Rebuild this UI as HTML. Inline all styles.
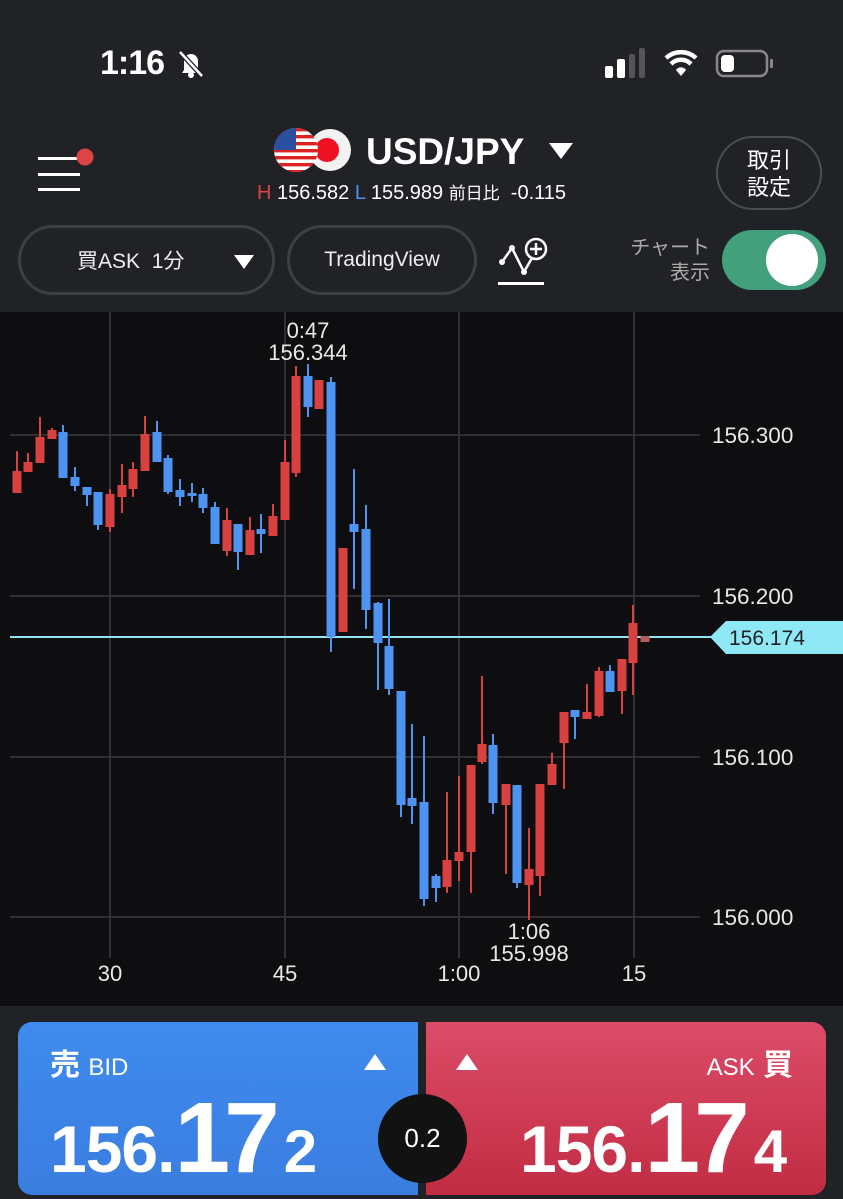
<!DOCTYPE html>
<html><head><meta charset="utf-8"><style>
*{margin:0;padding:0;box-sizing:border-box}
body{width:843px;height:1199px;background:#202226;position:relative;overflow:hidden;font-family:"Liberation Sans","Noto Sans CJK JP",sans-serif;color:#fff}
.a{position:absolute}
.pill{position:absolute;border:3px solid #3c3f44;border-radius:36px;display:flex;align-items:center;justify-content:center;font-size:21px;color:#eee}
.num{position:absolute;font-weight:bold;white-space:nowrap;line-height:1;display:flex;align-items:baseline}
</style></head><body>
<div class="a" style="left:100px;top:44px;font-size:34px;font-weight:bold;letter-spacing:-1px">1:16</div>
<svg class="a" style="left:174px;top:46px" width="34" height="34" viewBox="0 0 34 34"><path d="M10 24 V15 a7 7 0 0 1 14 0 V24 L26 27 H8 Z" fill="#fff"/><circle cx="17" cy="29" r="3" fill="#fff"/><line x1="6" y1="6" x2="28" y2="30" stroke="#202226" stroke-width="5"/><line x1="6" y1="6" x2="28" y2="30" stroke="#fff" stroke-width="2.5"/></svg>
<svg class="a" style="left:600px;top:46px" width="180" height="36"><rect x="5" y="20" width="8" height="12" rx="2" fill="#fff"/><rect x="17" y="13" width="8" height="19" rx="2" fill="#fff"/><rect x="29" y="8" width="6" height="24" rx="2" fill="#555"/><rect x="39" y="2" width="6" height="30" rx="2" fill="#555"/><path d="M66 12 a22 22 0 0 1 30 0" stroke="#fff" stroke-width="4.5" fill="none"/><path d="M71 18 a14 14 0 0 1 20 0" stroke="#fff" stroke-width="4.5" fill="none"/><path d="M76 24 a6 6 0 0 1 10 0 L81 30Z" fill="#fff"/><rect x="117" y="5" width="50" height="25" rx="7" stroke="#888" stroke-width="2.5" fill="none"/><rect x="121" y="9" width="13" height="17" rx="4" fill="#fff"/><rect x="170" y="13" width="3" height="9" rx="1" fill="#888"/></svg>
<svg class="a" style="left:30px;top:140px" width="70" height="60"><rect x="8" y="17" width="42" height="3" fill="#fff"/><rect x="8" y="33" width="42" height="3" fill="#fff"/><rect x="8" y="48" width="42" height="3" fill="#fff"/><circle cx="55" cy="17" r="8.5" fill="#d44"/></svg>
<svg class="a" style="left:270px;top:126px" width="90" height="50"><circle cx="60" cy="24" r="21" fill="#f2f2f2"/><circle cx="57" cy="24" r="12" fill="#e12"/><clipPath id="us"><circle cx="26" cy="24" r="22"/></clipPath><g clip-path="url(#us)"><rect x="0" y="0" width="50" height="50" fill="#fff"/><g fill="#d22"><rect x="0" y="2" width="50" height="3.4"/><rect x="0" y="9" width="50" height="3.4"/><rect x="0" y="16" width="50" height="3.4"/><rect x="0" y="23" width="50" height="3.4"/><rect x="0" y="30" width="50" height="3.4"/><rect x="0" y="37" width="50" height="3.4"/><rect x="0" y="44" width="50" height="3.4"/></g><rect x="0" y="0" width="26" height="24" fill="#2b4ea0"/></g></svg>
<div class="a" style="left:366px;top:131px;font-size:37px;font-weight:bold">USD/JPY</div>
<svg class="a" style="left:549px;top:143px" width="24" height="18"><path d="M0 0H24L12 16Z" fill="#fff"/></svg>
<div class="a" style="left:257px;top:179px;font-size:20px;white-space:nowrap"><span style="color:#d94444">H</span> 156.582 <span style="color:#4d94f2">L</span> 155.989 <span style="font-size:17px">前日比</span> &nbsp;-0.115</div>
<div class="a" style="left:716px;top:136px;width:106px;height:74px;border:2px solid #4a4d52;border-radius:37px;font-size:22px;text-align:center;line-height:27px;padding-top:9px">取引<br>設定</div>
<div class="pill" style="left:18px;top:225px;width:257px;height:70px;justify-content:flex-start;padding-left:56px">買ASK&nbsp;&nbsp;1分<svg style="position:absolute;left:213px;top:27px" width="20" height="14"><path d="M0 0H20L10 14Z" fill="#fff"/></svg></div>
<div class="pill" style="left:287px;top:225px;width:190px;height:70px">TradingView</div>
<svg class="a" style="left:494px;top:232px" width="60" height="56"><polyline points="8,30 18,16 30,40 38,26" stroke="#fff" stroke-width="2.5" fill="none"/><circle cx="8" cy="30" r="3" fill="#fff"/><circle cx="18" cy="16" r="3" fill="#fff"/><circle cx="30" cy="40" r="3" fill="#fff"/><circle cx="42" cy="17" r="10" stroke="#fff" stroke-width="2.5" fill="#202226"/><path d="M42 11V23M36 17H48" stroke="#fff" stroke-width="2.5"/><rect x="4" y="50" width="46" height="3" fill="#fff"/></svg>
<div class="a" style="left:600px;top:236px;width:110px;text-align:right;font-size:20px;line-height:25px;color:#aaa">チャート<br>表示</div>
<div class="a" style="left:722px;top:230px;width:104px;height:60px;border-radius:30px;background:#43a07d"><div class="a" style="left:44px;top:4px;width:52px;height:52px;border-radius:26px;background:#fff"></div></div>
<svg class="a" style="left:0;top:312px" width="843" height="694" viewBox="0 312 843 694">
<rect x="0" y="312" width="843" height="694" fill="#0e0e10"/>
<g stroke="#3a3a3d" stroke-width="1.5"><line x1="10" y1="435" x2="700" y2="435"/><line x1="10" y1="596" x2="700" y2="596"/><line x1="10" y1="757" x2="700" y2="757"/><line x1="10" y1="917" x2="700" y2="917"/><line x1="110" y1="312" x2="110" y2="958"/><line x1="285" y1="312" x2="285" y2="958"/><line x1="459" y1="312" x2="459" y2="958"/><line x1="634" y1="312" x2="634" y2="958"/></g>
<g font-size="22.5" fill="#e8e8e8" font-family="Liberation Sans,sans-serif"><text x="712" y="443">156.300</text><text x="712" y="604">156.200</text><text x="712" y="765">156.100</text><text x="712" y="925">156.000</text>
<g text-anchor="middle" font-size="22"><text x="110" y="981">30</text><text x="285" y="981">45</text><text x="459" y="981">1:00</text><text x="634" y="981">15</text><text x="308" y="338">0:47</text><text x="308" y="360">156.344</text><text x="529" y="939">1:06</text><text x="529" y="961">155.998</text></g></g>
<line x1="10" y1="637" x2="712" y2="637" stroke="#8fe3f2" stroke-width="2"/>
<path d="M710 637 L726 621 H843 V654 H726 Z" fill="#8fe8f6"/>
<text x="729" y="645" font-size="21" fill="#222">156.174</text>
<g>
<g fill="#d94040">
<rect x="16" y="451" width="2" height="42"/><rect x="12.5" y="471" width="9" height="22"/>
<rect x="27" y="453" width="2" height="19"/><rect x="23.5" y="462" width="9" height="10"/>
<rect x="39" y="417" width="2" height="46"/><rect x="35.5" y="437" width="9" height="26"/>
<rect x="51" y="428" width="2" height="11"/><rect x="47.5" y="430" width="9" height="9"/>
<rect x="109" y="489" width="2" height="43"/><rect x="105.5" y="494" width="9" height="33"/>
<rect x="121" y="464" width="2" height="49"/><rect x="117.5" y="485" width="9" height="12"/>
<rect x="132" y="462" width="2" height="35"/><rect x="128.5" y="469" width="9" height="20"/>
<rect x="144" y="416" width="2" height="55"/><rect x="140.5" y="434" width="9" height="37"/>
<rect x="226" y="508" width="2" height="48"/><rect x="222.5" y="520" width="9" height="31"/>
<rect x="249" y="517" width="2" height="38"/><rect x="245.5" y="530" width="9" height="25"/>
<rect x="272" y="504" width="2" height="32"/><rect x="268.5" y="516" width="9" height="20"/>
<rect x="284" y="440" width="2" height="80"/><rect x="280.5" y="462" width="9" height="58"/>
<rect x="295" y="366" width="2" height="111"/><rect x="291.5" y="376" width="9" height="97"/>
<rect x="314.5" y="380" width="9" height="29"/>
<rect x="342" y="548" width="2" height="84"/><rect x="338.5" y="548" width="9" height="84"/>
<rect x="446" y="792" width="2" height="101"/><rect x="442.5" y="860" width="9" height="27"/>
<rect x="458" y="776" width="2" height="105"/><rect x="454.5" y="852" width="9" height="9"/>
<rect x="470" y="765" width="2" height="128"/><rect x="466.5" y="765" width="9" height="87"/>
<rect x="481" y="676" width="2" height="88"/><rect x="477.5" y="744" width="9" height="18"/>
<rect x="505" y="784" width="2" height="90"/><rect x="501.5" y="784" width="9" height="21"/>
<rect x="528" y="828" width="2" height="92"/><rect x="524.5" y="869" width="9" height="16"/>
<rect x="539" y="784" width="2" height="112"/><rect x="535.5" y="784" width="9" height="92"/>
<rect x="551" y="753" width="2" height="32"/><rect x="547.5" y="764" width="9" height="21"/>
<rect x="563" y="712" width="2" height="77"/><rect x="559.5" y="712" width="9" height="31"/>
<rect x="586" y="684" width="2" height="35"/><rect x="582.5" y="712" width="9" height="7"/>
<rect x="598" y="667" width="2" height="50"/><rect x="594.5" y="671" width="9" height="45"/>
<rect x="621" y="659" width="2" height="55"/><rect x="617.5" y="659" width="9" height="32"/>
<rect x="632" y="605" width="2" height="90"/><rect x="628.5" y="623" width="9" height="40"/>
</g>
<rect x="640.5" y="636" width="9" height="6" fill="#b35a5a"/>
<g fill="#4d94f2">
<rect x="62" y="425" width="2" height="53"/><rect x="58.5" y="432" width="9" height="46"/>
<rect x="74" y="467" width="2" height="24"/><rect x="70.5" y="477" width="9" height="9"/>
<rect x="86" y="487" width="2" height="19"/><rect x="82.5" y="487" width="9" height="8"/>
<rect x="97" y="492" width="2" height="38"/><rect x="93.5" y="492" width="9" height="33"/>
<rect x="156" y="421" width="2" height="41"/><rect x="152.5" y="432" width="9" height="30"/>
<rect x="167" y="455" width="2" height="39"/><rect x="163.5" y="458" width="9" height="34"/>
<rect x="179" y="479" width="2" height="27"/><rect x="175.5" y="490" width="9" height="7"/>
<rect x="191" y="483" width="2" height="19"/><rect x="187.5" y="493" width="9" height="3"/>
<rect x="202" y="488" width="2" height="25"/><rect x="198.5" y="494" width="9" height="14"/>
<rect x="214" y="502" width="2" height="42"/><rect x="210.5" y="507" width="9" height="37"/>
<rect x="237" y="524" width="2" height="46"/><rect x="233.5" y="524" width="9" height="28"/>
<rect x="260" y="514" width="2" height="39"/><rect x="256.5" y="529" width="9" height="5"/>
<rect x="307" y="364" width="2" height="53"/><rect x="303.5" y="376" width="9" height="31"/>
<rect x="330" y="377" width="2" height="275"/><rect x="326.5" y="382" width="9" height="255"/>
<rect x="353" y="469" width="2" height="120"/><rect x="349.5" y="524" width="9" height="8"/>
<rect x="365" y="505" width="2" height="124"/><rect x="361.5" y="529" width="9" height="81"/>
<rect x="377" y="602" width="2" height="88"/><rect x="373.5" y="603" width="9" height="40"/>
<rect x="388" y="599" width="2" height="96"/><rect x="384.5" y="646" width="9" height="43"/>
<rect x="400" y="691" width="2" height="126"/><rect x="396.5" y="691" width="9" height="114"/>
<rect x="411" y="724" width="2" height="100"/><rect x="407.5" y="798" width="9" height="8"/>
<rect x="423" y="736" width="2" height="170"/><rect x="419.5" y="802" width="9" height="97"/>
<rect x="435" y="874" width="2" height="28"/><rect x="431.5" y="876" width="9" height="12"/>
<rect x="492" y="734" width="2" height="80"/><rect x="488.5" y="745" width="9" height="58"/>
<rect x="516" y="785" width="2" height="103"/><rect x="512.5" y="785" width="9" height="98"/>
<rect x="574" y="710" width="2" height="29"/><rect x="570.5" y="710" width="9" height="7"/>
<rect x="609" y="665" width="2" height="27"/><rect x="605.5" y="671" width="9" height="21"/>
</g></g>
</svg>
<div class="a" style="left:18px;top:1022px;width:400px;height:173px;border-radius:14px 0 0 14px;background:linear-gradient(#3f8bef,#3a7ddf)"></div>
<div class="a" style="left:426px;top:1022px;width:400px;height:173px;border-radius:0 14px 14px 0;background:linear-gradient(#dc4c68,#c12c42)"></div>
<div class="a" style="left:50px;top:1040px;font-size:30px;font-weight:bold">売 <span style="font-size:24px;font-weight:normal">BID</span></div>
<div class="a" style="right:50px;top:1040px;font-size:30px;font-weight:bold"><span style="font-size:24px;font-weight:normal">ASK</span> 買</div>
<svg class="a" style="left:364px;top:1054px" width="22" height="16"><path d="M0 16H22L11 0Z" fill="#fff"/></svg>
<svg class="a" style="left:456px;top:1054px" width="22" height="16"><path d="M0 16H22L11 0Z" fill="#fff"/></svg>
<div class="num" style="left:50px;top:1088px"><span style="font-size:66px;letter-spacing:-1px">156.</span><span style="font-size:100px;letter-spacing:-6px">17</span><span style="font-size:60px;margin-left:10px">2</span></div>
<div class="num" style="left:520px;top:1088px"><span style="font-size:66px;letter-spacing:-1px">156.</span><span style="font-size:100px;letter-spacing:-6px">17</span><span style="font-size:60px;margin-left:10px">4</span></div>
<div class="a" style="left:378px;top:1094px;width:89px;height:89px;border-radius:50%;background:#121213;font-size:26px;display:flex;align-items:center;justify-content:center">0.2</div>
</body></html>
